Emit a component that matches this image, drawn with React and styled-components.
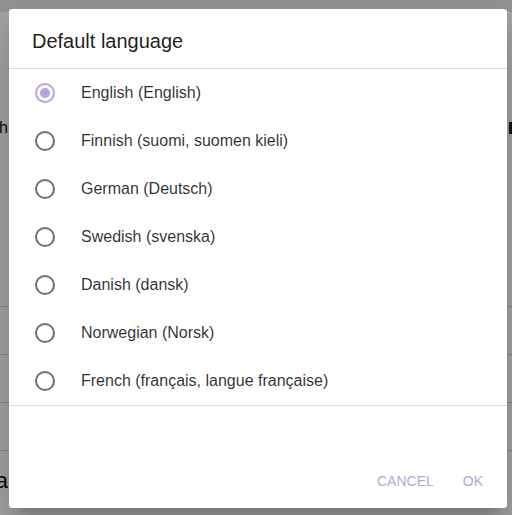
import React, { useState } from 'react';
import styled, { createGlobalStyle } from 'styled-components';

const languages = [
    'English (English)',
    'Finnish (suomi, suomen kieli)',
    'German (Deutsch)',
    'Swedish (svenska)',
    'Danish (dansk)',
    'Norwegian (Norsk)',
    'French (français, langue française)',
];

const GlobalStyle = createGlobalStyle`
    html, body {
        margin: 0;
        padding: 0;
        width: 100%;
        height: 100%;
        overflow: hidden;
        font-family: "Liberation Sans", Arial, sans-serif;
        background: #fff;
    }
    #root {
        height: 100%;
    }
`;

const Page = styled.div`
    position: relative;
    width: 100%;
    height: 100%;
    background: #fff;
    display: flex;
    flex-direction: column;
`;

const AppBar = styled.div`
    height: 12px;
    background: #e6e6e6;
`;

const Settings = styled.div`
    display: flex;
    flex-direction: column;
    padding-top: 92px;
`;

const SettingRow = styled.div`
    height: ${(p) => p.$height || 48}px;
    display: flex;
    align-items: center;
    justify-content: space-between;
    border-bottom: ${(p) => (p.$divider ? '1px solid #d0d0d0' : 'none')};
    box-sizing: border-box;
`;

const EdgeText = styled.div`
    width: 8px;
    overflow: hidden;
    display: flex;
    justify-content: flex-end;
    white-space: nowrap;
    font-size: ${(p) => p.$size || 16}px;
    color: #111;
`;

const EdgeMark = styled.div`
    width: 3px;
    height: 12px;
    background: #222;
`;

const Overlay = styled.div`
    position: absolute;
    inset: 0;
    background: rgba(0, 0, 0, 0.37);
`;

const Dialog = styled.div`
    position: absolute;
    left: 9px;
    top: 9px;
    width: 498px;
    height: 499px;
    background: #fff;
    border-radius: 3px;
    box-shadow: 0 11px 15px -7px rgba(0, 0, 0, 0.2), 0 24px 38px 3px rgba(0, 0, 0, 0.14);
    display: flex;
    flex-direction: column;
    box-sizing: border-box;
`;

const Title = styled.h2`
    margin: 0;
    height: 60px;
    padding: 6px 24px 0 23px;
    box-sizing: border-box;
    display: flex;
    align-items: center;
    font-size: 20px;
    font-weight: 400;
    color: rgba(0, 0, 0, 0.9);
    border-bottom: 1px solid #dcdcdc;
`;

const List = styled.div`
    display: flex;
    flex-direction: column;
    border-bottom: 1px solid #dcdcdc;
`;

const Option = styled.label`
    height: 48px;
    display: flex;
    align-items: center;
    padding-left: 24px;
    gap: 24px;
    cursor: pointer;
    font-size: 16px;
    color: rgba(0, 0, 0, 0.82);
`;

const RadioBox = styled.span`
    width: 24px;
    height: 24px;
    display: flex;
    align-items: center;
    justify-content: center;
`;

const Ring = styled.span`
    width: 20px;
    height: 20px;
    box-sizing: border-box;
    border-radius: 50%;
    border: 2px solid ${(p) => (p.$checked ? '#b7a4dc' : '#6f6f6f')};
    display: flex;
    align-items: center;
    justify-content: center;

    &::after {
        content: '';
        width: 10px;
        height: 10px;
        border-radius: 50%;
        background: ${(p) => (p.$checked ? '#b7a4dc' : 'transparent')};
    }
`;

const Actions = styled.div`
    flex: 1;
    display: flex;
    align-items: flex-end;
    justify-content: flex-end;
    gap: 13px;
    padding: 0 16px 9px;
`;

const FlatButton = styled.button`
    height: 36px;
    padding: 0 8px;
    border: 0;
    background: transparent;
    font-family: "Liberation Sans", Arial, sans-serif;
    font-size: 14px;
    text-transform: uppercase;
    color: #b7a4dc;
    cursor: pointer;
`;

const App = () => {
    const [selected, setSelected] = useState(0);

    return (
        <Page>
            <GlobalStyle />
            <AppBar />
            <Settings>
                <SettingRow>
                    <EdgeText>English</EdgeText>
                    <EdgeMark />
                </SettingRow>
                <SettingRow $height={155} $divider />
                <SettingRow $divider />
                <SettingRow $divider />
                <SettingRow $divider />
                <SettingRow $height={60}>
                    <EdgeText $size={22}>Data</EdgeText>
                </SettingRow>
            </Settings>
            <Overlay />
            <Dialog>
                <Title>Default language</Title>
                <List>
                    {languages.map((lang, i) => (
                        <Option key={lang} onClick={() => setSelected(i)}>
                            <RadioBox>
                                <Ring $checked={selected === i} />
                            </RadioBox>
                            {lang}
                        </Option>
                    ))}
                </List>
                <Actions>
                    <FlatButton>Cancel</FlatButton>
                    <FlatButton>Ok</FlatButton>
                </Actions>
            </Dialog>
        </Page>
    );
};

export default App;
